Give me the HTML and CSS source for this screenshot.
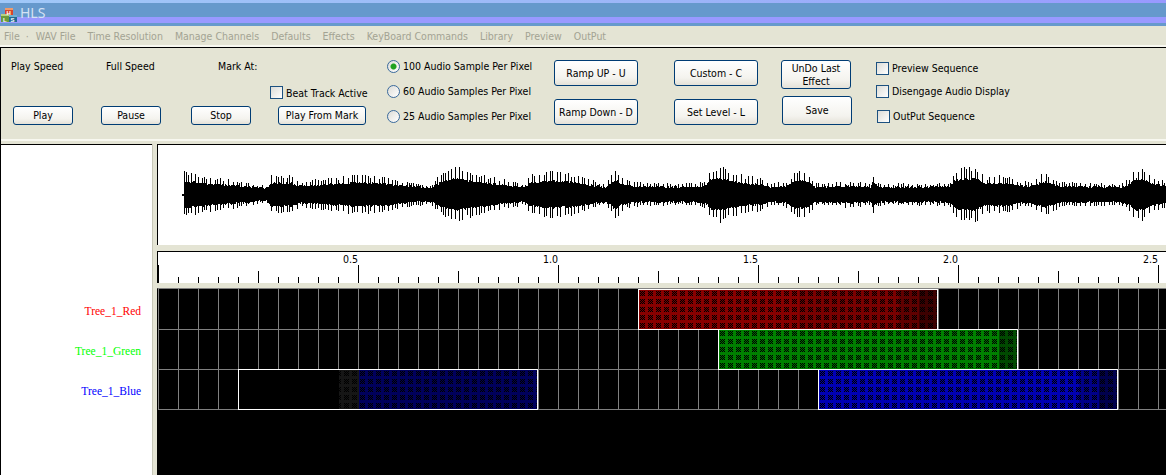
FILE: index.html
```html
<!DOCTYPE html>
<html lang="en">
  <head>
    <meta charset="UTF-8" />
    <title>HLS</title>
    <link rel="stylesheet" href="styles.css">
  </head>
  <body>
    <div class="titlebar">
      <svg class="app-icon" width="18" height="20" viewBox="0 0 18 20">
        <rect x="5" y="5" width="8" height="8" fill="#d8452a" />
        <rect x="5" y="5" width="8" height="2" fill="#f09a6a" />
        <rect x="1" y="11" width="8" height="8" fill="#6c9a3c" />
        <rect x="1" y="11" width="8" height="2" fill="#b8d080" />
        <rect x="9" y="12" width="8" height="7" fill="#1f6a94" />
        <rect x="9" y="12" width="8" height="2" fill="#70b0d0" />
        <text x="6.5" y="12" class="icon-letter">H</text>
        <text x="3" y="18.5" class="icon-letter">L</text>
        <text x="10.5" y="18.5" class="icon-letter">S</text>
      </svg>
      <span class="title-text">HLS</span>
    </div>
    <nav class="menu">
      <span class="menu-file">File &nbsp;·</span>
      <span>WAV File</span>
      <span>Time Resolution</span>
      <span>Manage Channels</span>
      <span>Defaults</span>
      <span>Effects</span>
      <span>KeyBoard Commands</span>
      <span>Library</span>
      <span>Preview</span>
      <span>OutPut</span>
    </nav>
    <section class="toolbar">
      <div class="col col-play">
        <span class="lbl">Play Speed</span>
        <button class="btn btn-transport">Play</button>
      </div>
      <div class="col col-pause">
        <span class="lbl">Full Speed</span>
        <button class="btn btn-transport">Pause</button>
      </div>
      <div class="col col-stop">
        <span class="lbl">Mark At:</span>
        <button class="btn btn-transport">Stop</button>
      </div>
      <div class="col col-mark">
        <label class="check"><input type="checkbox" />Beat Track Active</label>
        <button class="btn btn-mark">Play From Mark</button>
      </div>
      <div class="col col-radios">
        <label class="radio"><input type="radio" name="res" checked />100 Audio Sample Per Pixel</label>
        <label class="radio"><input type="radio" name="res" />60 Audio Samples Per Pixel</label>
        <label class="radio"><input type="radio" name="res" />25 Audio Samples Per Pixel</label>
      </div>
      <div class="col col-effects">
        <button class="btn btn-effect">Ramp UP - U</button>
        <button class="btn btn-effect">Ramp Down - D</button>
      </div>
      <div class="col col-levels">
        <button class="btn btn-effect">Custom - C</button>
        <button class="btn btn-effect">Set Level - L</button>
      </div>
      <div class="col col-save">
        <button class="btn btn-undo">UnDo Last Effect</button>
        <button class="btn btn-save">Save</button>
      </div>
      <div class="col col-checks">
        <label class="check"><input type="checkbox" />Preview Sequence</label>
        <label class="check"><input type="checkbox" />Disengage Audio Display</label>
        <label class="check check-output"><input type="checkbox" />OutPut Sequence</label>
      </div>
    </section>
    <main class="workspace">
      <aside class="channels">
        <div class="channel red">Tree_1_Red</div>
        <div class="channel green">Tree_1_Green</div>
        <div class="channel blue">Tree_1_Blue</div>
      </aside>
      <div class="divider"></div>
      <div class="display">
        <div class="wave"><canvas id="wave" width="1008" height="100"></canvas></div>
        <div class="ruler">
          <span>0.5</span>
          <span>1.0</span>
          <span>1.5</span>
          <span>2.0</span>
          <span>2.5</span>
        </div>
        <div class="timeline">
          <svg class="defs" width="0" height="0">
            <defs>
              <pattern id="hatch" x="1" y="1" width="8" height="8" patternUnits="userSpaceOnUse">
                <rect width="5" height="5" fill="#000" fill-opacity="0.15" />
                <path d="M0 0h1v1h-1zM2 0h1v1h-1zM4 0h1v1h-1zM1 1h1v1h-1zM3 1h1v1h-1zM0 2h1v1h-1zM2 2h1v1h-1zM4 2h1v1h-1zM1 3h1v1h-1zM3 3h1v1h-1zM0 4h1v1h-1zM2 4h1v1h-1zM4 4h1v1h-1z" fill="#000" />
              </pattern>
            </defs>
          </svg>
          <div class="track track-first">
            <div class="effect effect-red"><svg><rect width="100%" height="100%" fill="url(#hatch)" /></svg></div>
          </div>
          <div class="track">
            <div class="effect effect-green"><svg><rect width="100%" height="100%" fill="url(#hatch)" /></svg></div>
          </div>
          <div class="track">
            <div class="effect effect-blue-in"><svg><rect width="100%" height="100%" fill="url(#hatch)" /></svg></div>
            <div class="effect effect-blue-out"><svg><rect width="100%" height="100%" fill="url(#hatch)" /></svg></div>
          </div>
        </div>
      </div>
    </main>
    <script src="wave.js"></script>
  </body>
</html>
```

FILE: styles.css
```css
* {
  box-sizing: border-box;
}
html,
body {
  height: 100%;
}
body {
  margin: 0;
  display: flex;
  flex-direction: column;
  overflow: hidden;
  background: #e4e4d4;
  font-family: "DejaVu Sans", sans-serif;
  font-stretch: condensed;
  font-size: 10.5px;
  color: #000;
}

/* title bar */
.titlebar {
  flex: none;
  height: 26px;
  display: flex;
  align-items: center;
  gap: 2px;
  background:
    linear-gradient(90deg, #a0c8f8, #9cb4f8 60%, #9999ff) 0 0 / 100% 3px no-repeat,
    linear-gradient(#9999ff, #9999ff) 0 17px / 100% 6px no-repeat,
    #6699cc;
}
.app-icon {
  flex: none;
  margin-top: -1px;
}
.icon-letter {
  font-family: "Liberation Sans", sans-serif;
  font-size: 6px;
  font-weight: bold;
  fill: #fff;
}
.title-text {
  font-family: "Noto Sans", sans-serif;
  font-size: 14px;
  line-height: 14px;
  margin-top: -1px;
  color: #d4e2f4;
}

/* menu */
.menu {
  flex: none;
  height: 21px;
  padding-left: 4px;
  display: flex;
  align-items: center;
  gap: 12px;
  color: #a3a393;
  border-bottom: 2px solid #f8f8f0;
}
.menu-file {
  margin-right: -5px;
}

/* toolbar */
.toolbar {
  flex: none;
  height: 97px;
  display: flex;
  padding-left: 11px;
  border-top: 1px solid #000;
  border-left: 1px solid #000;
  position: relative;
}
.toolbar::after {
  content: "";
  position: absolute;
  left: 0;
  right: 0;
  top: 91px;
  height: 2px;
  background: #f8f8f0;
}
.col {
  flex: none;
  display: flex;
  flex-direction: column;
  align-items: flex-start;
  height: 91px;
}
.col-play {
  width: 90px;
  margin-left: -1px;
  padding: 10px 0 14px;
  justify-content: space-between;
}
.col-pause {
  width: 90px;
  padding: 10px 0 14px;
  justify-content: space-between;
}
.col-stop {
  width: 79px;
  padding: 10px 0 14px;
  justify-content: space-between;
}
.col-play .btn {
  margin-left: 2px;
}
.col-pause .lbl {
  margin-left: 5px;
}
.col-stop .lbl {
  margin-left: 27px;
}
.col-mark {
  width: 117px;
  padding-bottom: 14px;
  justify-content: flex-end;
  gap: 7px;
}
.col-mark .btn {
  margin-left: 8px;
}
.col-radios {
  width: 167px;
  padding-top: 10px;
  gap: 9px;
}
.col-effects {
  width: 120px;
  padding-top: 12px;
  gap: 13px;
}
.col-levels {
  width: 107px;
  padding-top: 12px;
  gap: 13px;
}
.col-save {
  width: 95px;
  padding-top: 12px;
  gap: 7px;
}
.col-checks {
  padding-top: 12px;
  gap: 7px;
}
.check-output {
  margin: 2px 0 0 1px;
}
.lbl {
  line-height: 16px;
}

/* controls */
.btn {
  display: block;
  padding: 0;
  border: 1px solid #003c74;
  border-radius: 3px;
  background: linear-gradient(#ffffff, #f4f3ee 70%, #e4e1d8);
  font: inherit;
  color: #000;
  line-height: 13px;
}
.btn-transport {
  width: 60px;
  height: 19px;
}
.btn-mark {
  width: 88px;
  height: 19px;
}
.btn-effect {
  width: 84px;
  height: 26px;
}
.btn-undo {
  width: 70px;
  height: 29px;
}
.btn-save {
  width: 70px;
  height: 29px;
  margin-left: 1px;
}
.check,
.radio {
  display: flex;
  align-items: center;
  gap: 3px;
  height: 16px;
  white-space: nowrap;
}
.col-mark .check {
  height: 13px;
}
.check input,
.radio input {
  -webkit-appearance: none;
  appearance: none;
  flex: none;
  width: 13px;
  height: 13px;
  margin: 0;
  border: 1px solid #1c5180;
  background: linear-gradient(135deg, #dcdcd7, #ffffff);
}
.radio input {
  border-radius: 50%;
  border-color: #3a6a9c;
}
.radio input:checked {
  background: radial-gradient(circle, #21a121 0 2.5px, #7fcf7f 3px, transparent 3.5px),
    linear-gradient(135deg, #dcdcd7, #ffffff);
}

/* lower area */
.workspace {
  flex: 1;
  min-height: 0;
  display: flex;
}
.channels {
  flex: none;
  width: 152px;
  padding: 145px 11px 0 0;
  background: #fff;
  border-top: 1px solid #000;
  border-left: 1px solid #000;
}
.channel {
  height: 40px;
  padding-top: 14px;
  text-align: right;
  font-family: "Liberation Serif", serif;
  font-stretch: normal;
  font-size: 11.5px;
  line-height: 14px;
}
.red {
  color: #ff0000;
}
.green {
  color: #00ff00;
}
.blue {
  color: #0000ff;
}
.divider {
  flex: none;
  width: 5px;
  background: #e4e4d4;
  border-left: 1px solid #c8c8b8;
}
.display {
  flex: 1;
  min-width: 0;
  display: flex;
  flex-direction: column;
}
.wave {
  flex: none;
  height: 101px;
  background: #fff;
  border-top: 1px solid #000;
  border-left: 1px solid #000;
  overflow: hidden;
}
.wave canvas {
  display: block;
}
.ruler {
  flex: none;
  height: 32px;
  margin-top: 6px;
  padding-left: 1px;
  display: flex;
  align-items: flex-start;
  background-color: #fff;
  background-image:
    repeating-linear-gradient(90deg, #000 0 1px, transparent 1px 20px),
    repeating-linear-gradient(90deg, #000 0 1px, transparent 1px 100px),
    repeating-linear-gradient(90deg, #000 0 1px, transparent 1px 200px);
  background-size: 100% 6px, 100% 12px, 100% 18px;
  background-position: 0 100%;
  background-repeat: no-repeat;
  border-top: 1px solid #000;
  border-left: 1px solid #000;
}
.ruler span {
  flex: none;
  width: 200px;
  padding: 1px 1px 0 0;
  text-align: right;
  line-height: 12px;
}
.timeline {
  flex: 1;
  min-height: 0;
  margin-top: 5px;
  background: #000;
  border-top: 1px solid #808080;
  border-left: 1px solid #000;
}
.defs {
  display: block;
}
.track {
  position: relative;
  height: 40px;
  border-bottom: 1px solid #808080;
  background: repeating-linear-gradient(90deg, #808080 0 1px, transparent 1px 20px) 0 0 / 100% 100%;
}
.track-first {
  height: 41px;
}
.effect {
  position: absolute;
  top: -1px;
  height: 41px;
  width: 300px;
  border: 1px solid #fff;
}
.effect svg {
  display: block;
  width: 100%;
  height: 100%;
}
.effect-red {
  top: 0;
  left: 480px;
  background: linear-gradient(90deg, #880000 0 160px, #7a0000 160px 260px, #600000 260px 280px, #3c0000 280px);
}
.effect-green {
  left: 560px;
  background: linear-gradient(90deg, #008000 0 280px, #004a00 280px);
}
.effect-blue-in {
  left: 80px;
  background: linear-gradient(90deg, #000 0 100px, #161616 100px 120px, #00005c 120px);
}
.effect-blue-out {
  left: 660px;
  background: linear-gradient(90deg, #0000b4 0 260px, #000088 260px 280px, #00004c 280px);
}
```

FILE: wave.js
```js
// audio display: envelope points are [x, peak amplitude]
const env = [
  [26, 20], [32, 18], [52, 14], [77, 11], [97, 7], [109, 6], [112, 16], [132, 16],
  [142, 10], [162, 12], [199, 17], [227, 14], [242, 11], [262, 8], [272, 6], [282, 17],
  [297, 25], [312, 20], [332, 15], [352, 10], [367, 8], [372, 16], [392, 20], [412, 18],
  [432, 12], [447, 7], [452, 14], [457, 24], [462, 14], [477, 9], [532, 8], [547, 10],
  [552, 22], [562, 25], [572, 20], [587, 15], [602, 14], [612, 8], [627, 9], [637, 20],
  [645, 21], [652, 14], [657, 8], [692, 10], [712, 8], [714, 17], [722, 8], [772, 8],
  [792, 9], [797, 22], [817, 25], [827, 14], [842, 16], [852, 14], [862, 10], [872, 10],
  [887, 19], [894, 14], [902, 9], [962, 8], [970, 12], [977, 24], [987, 22], [994, 14], [1008, 10]
];

function ampAt(x) {
  for (let i = 1; i < env.length; i++) {
    if (x <= env[i][0]) {
      const t = (x - env[i - 1][0]) / (env[i][0] - env[i - 1][0]);
      return env[i - 1][1] + (env[i][1] - env[i - 1][1]) * t;
    }
  }
  return 10;
}

let seed = 12345;
function rnd() {
  seed = (seed * 16807) % 2147483647;
  return seed / 2147483647;
}

const ctx = document.getElementById("wave").getContext("2d");
const mid = 49.5;
ctx.fillStyle = "#000";
ctx.fillRect(24, 49, 2, 2);

let nextSpike = 26;
for (let x = 26; x < 1008; x++) {
  const peak = ampAt(x) + 3;
  const body = peak * 0.5 + 1;
  let up = body + rnd() * 2;
  let down = body + rnd() * 2;
  if (x >= nextSpike) {
    up = peak * (0.85 + rnd() * 0.2);
    down = peak * (0.85 + rnd() * 0.2);
    nextSpike = x + 2 + Math.floor(rnd() * 4);
  }
  const top = Math.round(mid - up);
  ctx.fillRect(x, top, 1, Math.round(mid + down) - top);
}
```
